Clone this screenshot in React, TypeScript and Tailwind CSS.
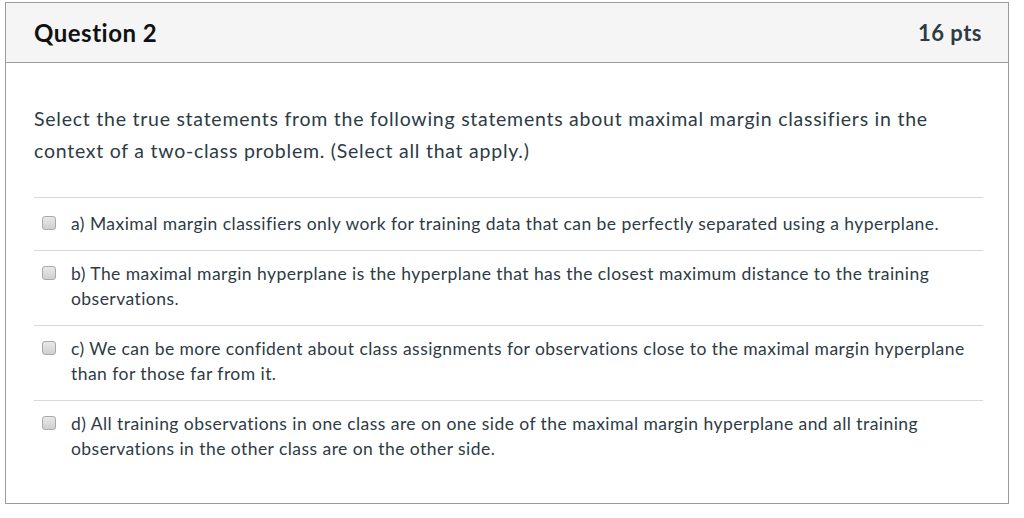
export default function App() {
  const answers = [
    'a) Maximal margin classifiers only work for training data that can be perfectly separated using a hyperplane.',
    'b) The maximal margin hyperplane is the hyperplane that has the closest maximum distance to the training observations.',
    'c) We can be more confident about class assignments for observations close to the maximal margin hyperplane than for those far from it.',
    'd) All training observations in one class are on one side of the maximal margin hyperplane and all training observations in the other class are on the other side.',
  ];

  return (
    <div className="w-[1024px] h-[518px] bg-white pt-[2px] pl-[5px]" style={{ fontFamily: 'Lato, "Liberation Sans", sans-serif' }}>
      <div className="w-[1004px] h-[502px] border border-[#9b9b9b] flex flex-col">
        {/* Header */}
        <div className="h-[60px] shrink-0 bg-[#f5f5f5] border-b border-[#9b9b9b] flex items-center justify-between pl-[28px] pr-[26px]">
          <h2 className="text-[24px] tracking-[0.5px] font-bold text-[#111]">Question 2</h2>
          <span className="text-[22px] tracking-[0.5px] font-bold text-[#2d3b45]">16 pts</span>
        </div>

        <div className="pl-[28px] pr-[26px] pt-[40px]">
          <p className="text-[19.5px] tracking-[0.75px] leading-[32px] text-[#2d3b45] w-[945px]">
            Select the true statements from the following statements about maximal margin classifiers in the context of a two-class problem. (Select all that apply.)
          </p>

          <div className="mt-[30px] w-[949px]">
            {answers.map((a, i) => (
              <div key={i} className={`flex items-start gap-[15px] border-t border-[#d7d7d7] pl-[8px] pr-[6px] ${i === 0 ? 'pt-[13px] pb-[14px]' : 'pt-[10px] pb-[14px]'}`}>
                <span className="mt-[5px] w-[14px] h-[14px] shrink-0 rounded-[3px] border border-[#a9a9a9] bg-gradient-to-b from-[#e9e9e9] to-[#cfcfcf]" />
                <span className="text-[17.5px] tracking-[0.45px] leading-[25px] text-[#2d3b45]">{a}</span>
              </div>
            ))}
          </div>
        </div>
      </div>
    </div>
  );
}
